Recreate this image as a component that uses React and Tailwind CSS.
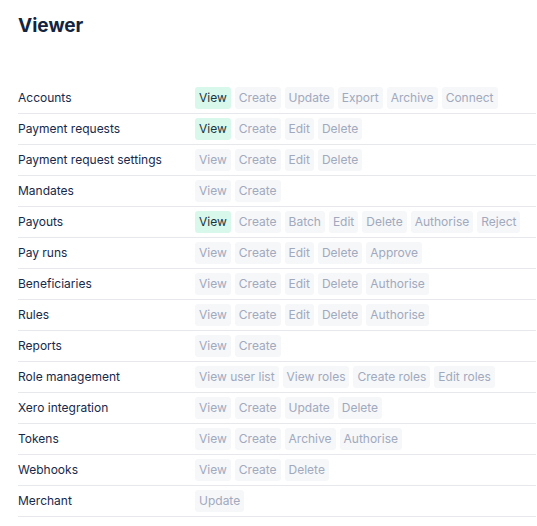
import React from "react";

const ROWS = [
  { name: "Accounts", perms: ["View", "Create", "Update", "Export", "Archive", "Connect"], active: ["View"] },
  { name: "Payment requests", perms: ["View", "Create", "Edit", "Delete"], active: ["View"] },
  { name: "Payment request settings", perms: ["View", "Create", "Edit", "Delete"] },
  { name: "Mandates", perms: ["View", "Create"] },
  { name: "Payouts", perms: ["View", "Create", "Batch", "Edit", "Delete", "Authorise", "Reject"], active: ["View"] },
  { name: "Pay runs", perms: ["View", "Create", "Edit", "Delete", "Approve"] },
  { name: "Beneficiaries", perms: ["View", "Create", "Edit", "Delete", "Authorise"] },
  { name: "Rules", perms: ["View", "Create", "Edit", "Delete", "Authorise"] },
  { name: "Reports", perms: ["View", "Create"] },
  { name: "Role management", perms: ["View user list", "View roles", "Create roles", "Edit roles"] },
  { name: "Xero integration", perms: ["View", "Create", "Update", "Delete"] },
  { name: "Tokens", perms: ["View", "Create", "Archive", "Authorise"] },
  { name: "Webhooks", perms: ["View", "Create", "Delete"] },
  { name: "Merchant", perms: ["Update"] },
];

const Pill = ({ label, active }) => (
  <span
    className={
      active
        ? "rounded-[3px] bg-[#d8f8ec] px-1 text-[12px] leading-[22px] text-[#1d3340]"
        : "rounded-[3px] bg-[#f6f7f9] px-1 text-[12px] leading-[22px] text-[#a1a9bd]"
    }
  >
    {label}
  </span>
);

const App = () => {
  return (
    <div
      className="min-h-[526px] w-[537px] bg-white pl-[18px] pr-px pt-[14px]"
      style={{ fontFamily: "Inter, 'Noto Sans', sans-serif" }}
    >
      <h1 className="text-[19px] font-bold leading-[24px] text-[#14243f]">Viewer</h1>
      <div className="mt-[45px]">
        {ROWS.map((row) => (
          <div
            key={row.name}
            className="flex items-center border-b border-[#e6e8ec] py-1"
          >
            <div className="w-[177px] shrink-0 text-[12px] text-[#16294a]">{row.name}</div>
            <div className="flex gap-1">
              {row.perms.map((p) => (
                <Pill key={p} label={p} active={(row.active || []).includes(p)} />
              ))}
            </div>
          </div>
        ))}
      </div>
    </div>
  );
};

export default App;
